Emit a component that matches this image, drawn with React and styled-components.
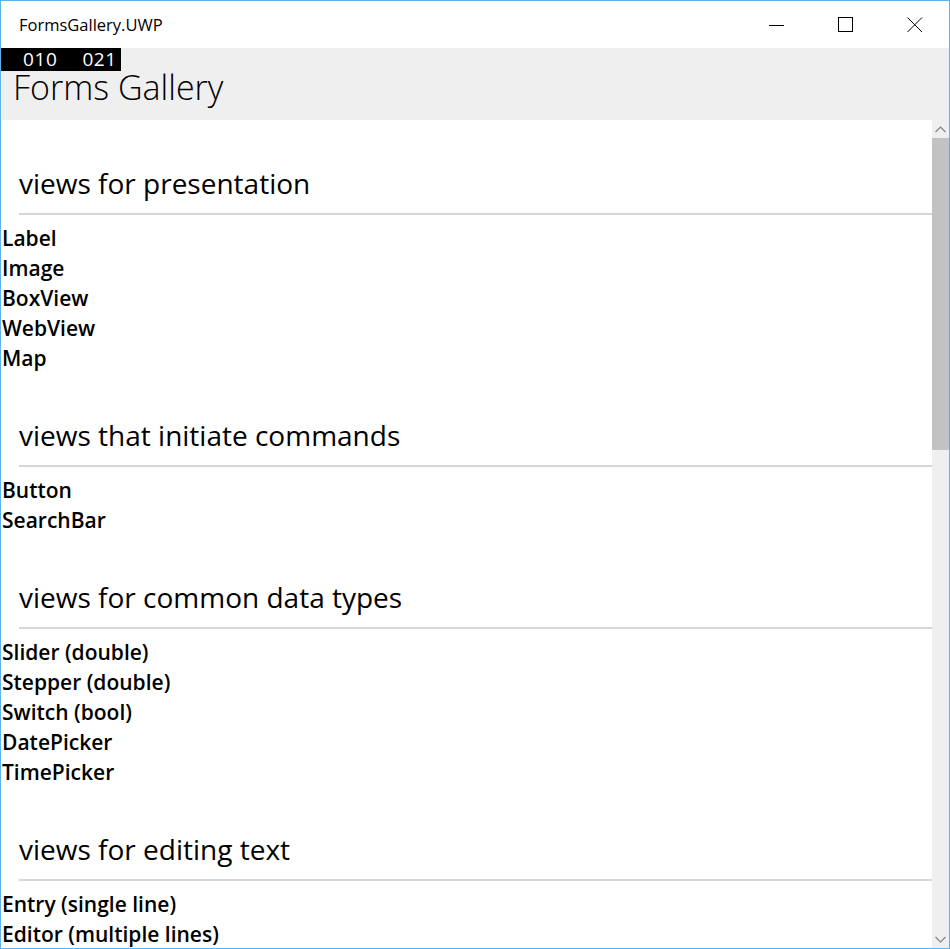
import React from "react";
import styled, { createGlobalStyle } from "styled-components";

const GlobalStyle = createGlobalStyle`
  html, body {
    margin: 0;
    padding: 0;
    background: #ffffff;
  }
  * {
    box-sizing: border-box;
  }
`;

const Window = styled.div`
  width: 950px;
  height: 949px;
  border: 1px solid #5fb2ec;
  display: flex;
  flex-direction: column;
  overflow: hidden;
  font-family: "Open Sans", "Noto Sans", sans-serif;
  color: #000;
`;

const TitleBar = styled.div`
  height: 47px;
  display: flex;
  align-items: center;
  background: #fff;
  flex-shrink: 0;
`;

const TitleText = styled.div`
  flex: 1;
  padding-left: 18px;
  font-size: 16.5px;
`;

const ControlButton = styled.div`
  width: 69px;
  height: 47px;
  display: flex;
  align-items: center;
  justify-content: center;
`;

const Header = styled.div`
  position: relative;
  height: 72px;
  background: #efefef;
  flex-shrink: 0;
  display: flex;
  align-items: flex-end;
  padding: 0 0 18px 12px;
`;

const Counter = styled.div`
  position: absolute;
  z-index: 1;
  top: 0;
  left: 0;
  width: 120px;
  height: 23px;
  background: #000;
  color: #fff;
  font-family: "Open Sans", sans-serif;
  font-size: 19px;
  line-height: 22px;
  display: flex;
  gap: 25px;
  padding-left: 22px;
`;

const Count = styled.span`
  letter-spacing: 0.6px;
`;

const PageTitle = styled.div`
  font-size: 34px;
  font-weight: 300;
  line-height: 30px;
`;

const Body = styled.div`
  flex: 1;
  display: flex;
  min-height: 0;
`;

const List = styled.div`
  flex: 1;
  padding-top: 1px;
  overflow: hidden;
`;

const Section = styled.div`
  padding-top: 45px;
`;

const SectionTitle = styled.div`
  margin-left: 18px;
  height: 34px;
  line-height: 34px;
  font-size: 28px;
  font-weight: 400;
`;

const Rule = styled.div`
  margin: 13px 0 0 18px;
  height: 2px;
  background: #d6d6d6;
`;

const Items = styled.div`
  margin-top: 8px;
`;

const Item = styled.div`
  height: 30px;
  line-height: 30px;
  padding-left: 1px;
  font-size: 21px;
  font-weight: 600;
`;

const ScrollBar = styled.div`
  width: 17px;
  background: #efefef;
  display: flex;
  flex-direction: column;
`;

const ScrollArrow = styled.div`
  height: 18px;
  display: flex;
  align-items: center;
  justify-content: center;
`;

const Thumb = styled.div`
  height: 312px;
  background: #c2c2c2;
`;

const Track = styled.div`
  flex: 1;
`;

const sections = [
  {
    title: "views for presentation",
    items: ["Label", "Image", "BoxView", "WebView", "Map"],
  },
  {
    title: "views that initiate commands",
    items: ["Button", "SearchBar"],
  },
  {
    title: "views for common data types",
    items: [
      "Slider (double)",
      "Stepper (double)",
      "Switch (bool)",
      "DatePicker",
      "TimePicker",
    ],
  },
  {
    title: "views for editing text",
    items: ["Entry (single line)", "Editor (multiple lines)"],
  },
];

const Chevron = ({ up }) => (
  <svg width="11" height="7" viewBox="0 0 11 7">
    <path
      d={up ? "M0.5 6 L5.5 1 L10.5 6" : "M0.5 1 L5.5 6 L10.5 1"}
      fill="none"
      stroke="#858585"
      strokeWidth="1.2"
    />
  </svg>
);

export default function App() {
  return (
    <>
      <GlobalStyle />
      <Window>
        <TitleBar>
          <TitleText>FormsGallery.UWP</TitleText>
          <ControlButton>
            <svg width="16" height="16" viewBox="0 0 16 16">
              <path d="M0 8.5 H15" stroke="#000" strokeWidth="1" />
            </svg>
          </ControlButton>
          <ControlButton>
            <svg width="16" height="16" viewBox="0 0 16 16">
              <rect x="0.5" y="0.5" width="14" height="14" fill="none" stroke="#000" />
            </svg>
          </ControlButton>
          <ControlButton>
            <svg width="16" height="16" viewBox="0 0 16 16">
              <path d="M0.5 0.5 L15 15 M15 0.5 L0.5 15" stroke="#000" strokeWidth="1" />
            </svg>
          </ControlButton>
        </TitleBar>
        <Header>
          <Counter>
            <Count>010</Count>
            <Count>021</Count>
          </Counter>
          <PageTitle>Forms Gallery</PageTitle>
        </Header>
        <Body>
          <List>
            {sections.map((s) => (
              <Section key={s.title}>
                <SectionTitle>{s.title}</SectionTitle>
                <Rule />
                <Items>
                  {s.items.map((it) => (
                    <Item key={it}>{it}</Item>
                  ))}
                </Items>
              </Section>
            ))}
          </List>
          <ScrollBar>
            <ScrollArrow>
              <Chevron up />
            </ScrollArrow>
            <Thumb />
            <Track />
            <ScrollArrow>
              <Chevron />
            </ScrollArrow>
          </ScrollBar>
        </Body>
      </Window>
    </>
  );
}
